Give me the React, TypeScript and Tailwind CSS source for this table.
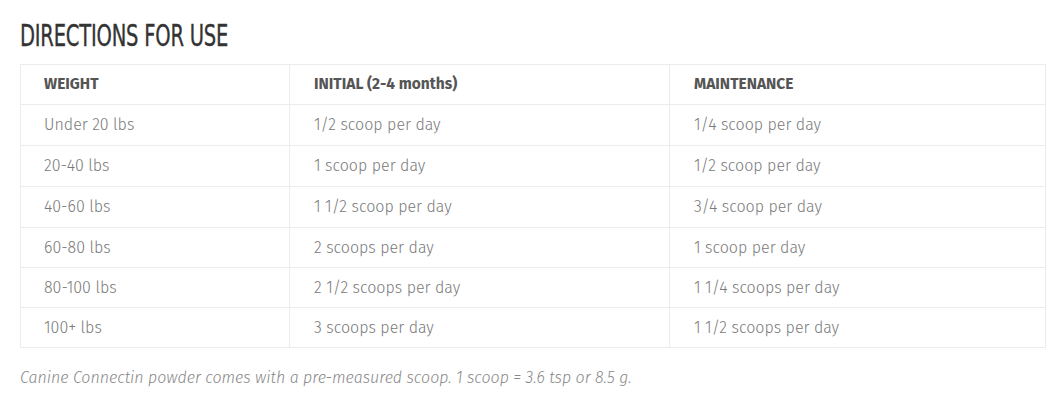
import React from "react";

const rows: [string, string, string, string][] = [
  ["Under 20 lbs", "1/2 scoop per day", "1/4 scoop per day", "h-[41px] border-b"],
  ["20-40 lbs", "1 scoop per day", "1/2 scoop per day", "h-[41px] border-b"],
  ["40-60 lbs", "1 1/2 scoop per day", "3/4 scoop per day", "h-[41px] border-b"],
  ["60-80 lbs", "2 scoops per day", "1 scoop per day", "h-[40px] border-b"],
  ["80-100 lbs", "2 1/2 scoops per day", "1 1/4 scoops per day", "h-[40px] border-b"],
  ["100+ lbs", "3 scoops per day", "1 1/2 scoops per day", "h-[39px]"],
];

const body = { fontFamily: "'Fira Sans', 'Open Sans', 'Noto Sans', sans-serif" };

export default function App() {
  return (
    <div className="w-[1064px] h-[404px] bg-white px-[20px] pt-[15px] overflow-hidden" style={body}>
      <h2
        className="text-[31px] leading-[40px] text-[#333] font-normal tracking-[-0.3px] origin-left scale-x-[0.70] whitespace-nowrap [-webkit-text-stroke:0.35px_#333]"
        style={{ fontFamily: "'DejaVu Sans Condensed', 'Liberation Sans Narrow', 'Liberation Sans', sans-serif" }}
      >
        DIRECTIONS FOR USE
      </h2>
      <div className="mt-[9px] w-[1026px] border border-[#ececec]">
        <div className="flex h-[40px] border-b border-[#ececec] text-[15.5px] font-bold text-[#555]">
          <div className="w-[269px] pl-[23px] flex items-center border-r border-[#ececec]">WEIGHT</div>
          <div className="w-[380px] pl-[24px] flex items-center border-r border-[#ececec]">INITIAL (2-4 months)</div>
          <div className="flex-1 pl-[24px] flex items-center">MAINTENANCE</div>
        </div>
        {rows.map((r, i) => (
          <div
            key={i}
            className={`flex ${r[3]} border-[#ececec] text-[16px] font-light text-[#7a7a7a]`}
          >
            <div className="w-[269px] pl-[23px] flex items-center border-r border-[#ececec]">{r[0]}</div>
            <div className="w-[380px] pl-[24px] flex items-center border-r border-[#ececec]">{r[1]}</div>
            <div className="flex-1 pl-[24px] flex items-center">{r[2]}</div>
          </div>
        ))}
      </div>
      <p className="mt-[18px] text-[16px] leading-[24px] italic font-light text-[#888]">
        Canine Connectin powder comes with a pre-measured scoop. 1 scoop = 3.6 tsp or 8.5 g.
      </p>
    </div>
  );
}
